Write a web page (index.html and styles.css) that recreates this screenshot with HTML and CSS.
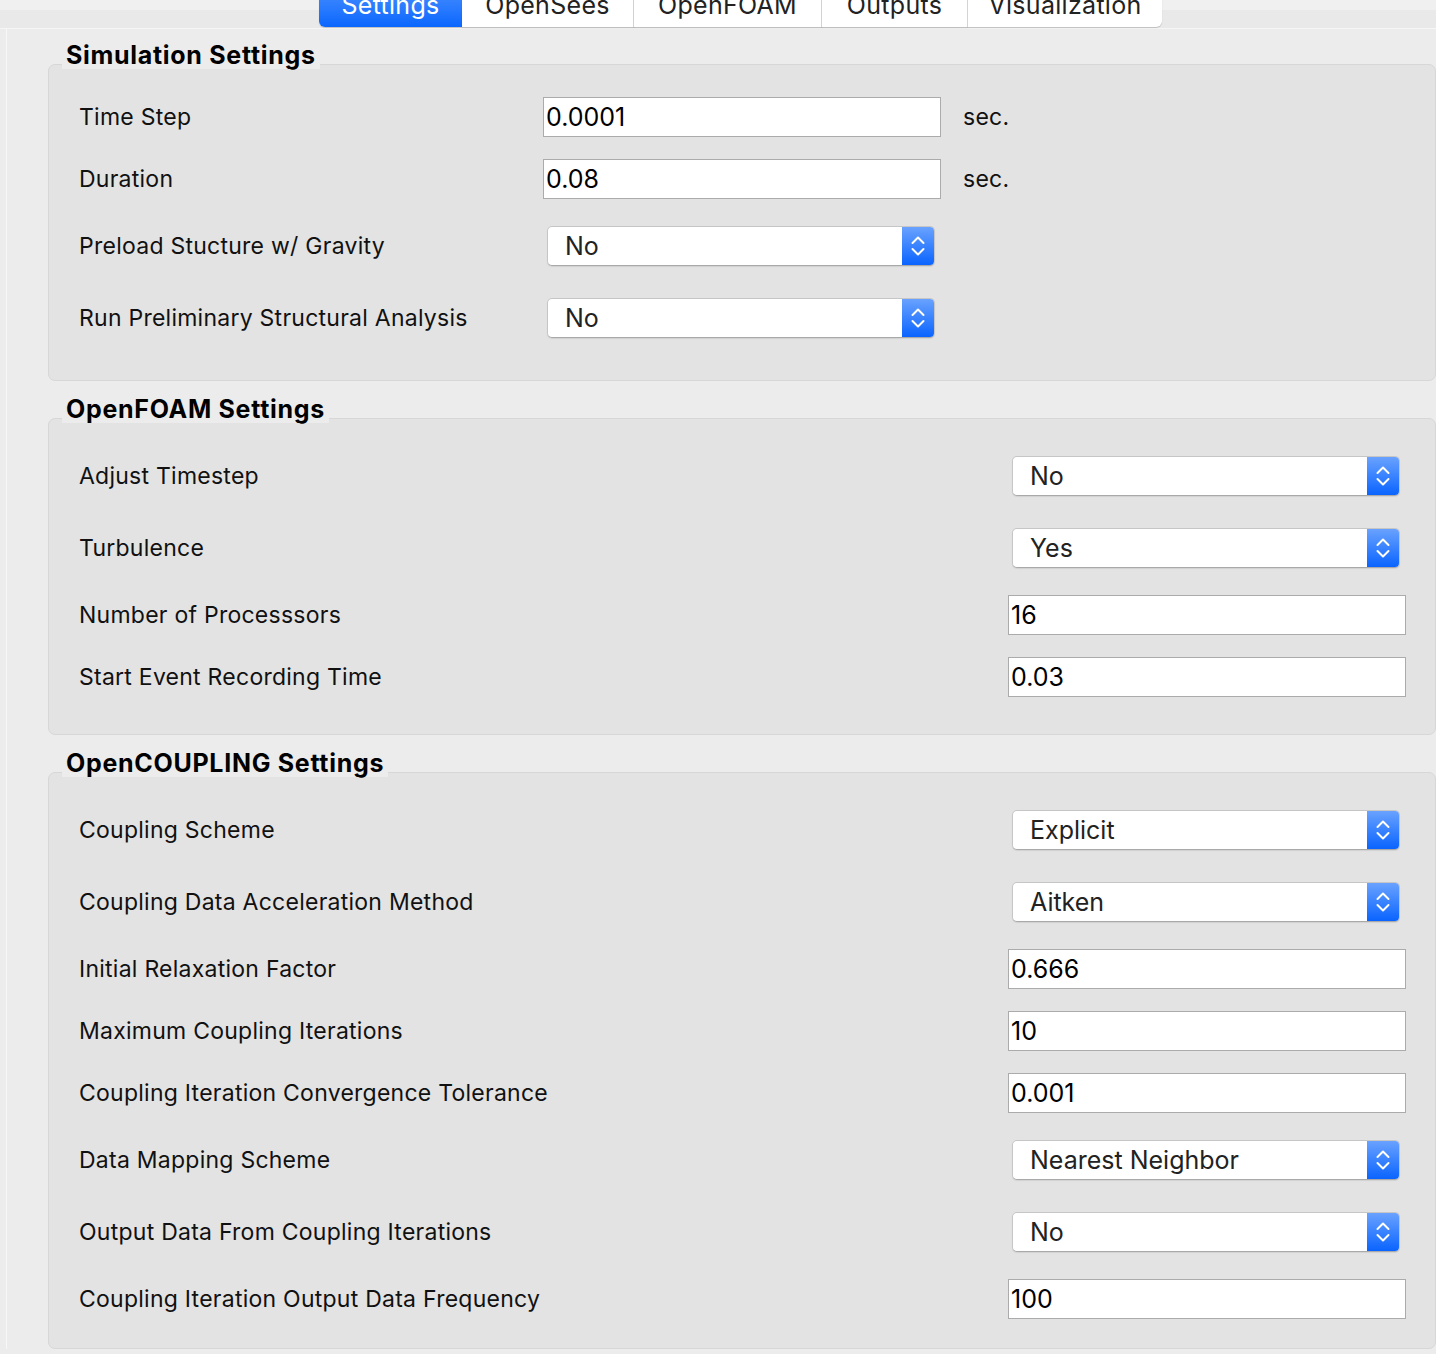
FILE: index.html
```html
<!DOCTYPE html>
<html>
<head>
<meta charset="utf-8">
<title>Settings</title>
<link rel="stylesheet" href="styles.css">
</head>
<body>
<div class="window">
  <div class="tabbar">
    <div class="tabs">
      <div class="tab tab--active tab--settings">Settings</div>
      <div class="tab tab--opensees">OpenSees</div>
      <div class="tab tab--openfoam">OpenFOAM</div>
      <div class="tab tab--outputs">Outputs</div>
      <div class="tab tab--vis">Visualization</div>
    </div>
  </div>
  <div class="panel">
    <section class="group">
      <h2 class="group-title">Simulation Settings</h2>
      <div class="group-box grid-units">
        <div class="label">Time Step</div>
        <div class="field"><input class="text-input" type="text" value="0.0001"></div>
        <div class="unit">sec.</div>

        <div class="label">Duration</div>
        <div class="field"><input class="text-input" type="text" value="0.08"></div>
        <div class="unit">sec.</div>

        <div class="label row-select">Preload Stucture w/ Gravity</div>
        <div class="field row-select"><div class="select"><span class="select-value">No</span><span class="select-btn"><svg width="16" height="28" viewBox="0 0 16 28"><path d="M2.5 11 L8 5.5 L13.5 11 M2.5 17 L8 22.5 L13.5 17" fill="none" stroke="#fff" stroke-width="2" stroke-linecap="round" stroke-linejoin="round"/></svg></span></div></div>
        <div class="unit row-select"></div>

        <div class="label row-select">Run Preliminary Structural Analysis</div>
        <div class="field row-select"><div class="select"><span class="select-value">No</span><span class="select-btn"><svg width="16" height="28" viewBox="0 0 16 28"><path d="M2.5 11 L8 5.5 L13.5 11 M2.5 17 L8 22.5 L13.5 17" fill="none" stroke="#fff" stroke-width="2" stroke-linecap="round" stroke-linejoin="round"/></svg></span></div></div>
        <div class="unit row-select"></div>
      </div>
    </section>

    <section class="group">
      <h2 class="group-title">OpenFOAM Settings</h2>
      <div class="group-box grid-right">
        <div class="label row-select">Adjust Timestep</div>
        <div class="field row-select"><div class="select"><span class="select-value">No</span><span class="select-btn"><svg width="16" height="28" viewBox="0 0 16 28"><path d="M2.5 11 L8 5.5 L13.5 11 M2.5 17 L8 22.5 L13.5 17" fill="none" stroke="#fff" stroke-width="2" stroke-linecap="round" stroke-linejoin="round"/></svg></span></div></div>

        <div class="label row-select">Turbulence</div>
        <div class="field row-select"><div class="select"><span class="select-value">Yes</span><span class="select-btn"><svg width="16" height="28" viewBox="0 0 16 28"><path d="M2.5 11 L8 5.5 L13.5 11 M2.5 17 L8 22.5 L13.5 17" fill="none" stroke="#fff" stroke-width="2" stroke-linecap="round" stroke-linejoin="round"/></svg></span></div></div>

        <div class="label">Number of Processsors</div>
        <div class="field"><input class="text-input" type="text" value="16"></div>

        <div class="label">Start Event Recording Time</div>
        <div class="field"><input class="text-input" type="text" value="0.03"></div>
      </div>
    </section>

    <section class="group">
      <h2 class="group-title">OpenCOUPLING Settings</h2>
      <div class="group-box group-box--last grid-right">
        <div class="label row-select">Coupling Scheme</div>
        <div class="field row-select"><div class="select"><span class="select-value">Explicit</span><span class="select-btn"><svg width="16" height="28" viewBox="0 0 16 28"><path d="M2.5 11 L8 5.5 L13.5 11 M2.5 17 L8 22.5 L13.5 17" fill="none" stroke="#fff" stroke-width="2" stroke-linecap="round" stroke-linejoin="round"/></svg></span></div></div>

        <div class="label row-select">Coupling Data Acceleration Method</div>
        <div class="field row-select"><div class="select"><span class="select-value">Aitken</span><span class="select-btn"><svg width="16" height="28" viewBox="0 0 16 28"><path d="M2.5 11 L8 5.5 L13.5 11 M2.5 17 L8 22.5 L13.5 17" fill="none" stroke="#fff" stroke-width="2" stroke-linecap="round" stroke-linejoin="round"/></svg></span></div></div>

        <div class="label">Initial Relaxation Factor</div>
        <div class="field"><input class="text-input" type="text" value="0.666"></div>

        <div class="label">Maximum Coupling Iterations</div>
        <div class="field"><input class="text-input" type="text" value="10"></div>

        <div class="label">Coupling Iteration Convergence Tolerance</div>
        <div class="field"><input class="text-input" type="text" value="0.001"></div>

        <div class="label row-select">Data Mapping Scheme</div>
        <div class="field row-select"><div class="select"><span class="select-value">Nearest Neighbor</span><span class="select-btn"><svg width="16" height="28" viewBox="0 0 16 28"><path d="M2.5 11 L8 5.5 L13.5 11 M2.5 17 L8 22.5 L13.5 17" fill="none" stroke="#fff" stroke-width="2" stroke-linecap="round" stroke-linejoin="round"/></svg></span></div></div>

        <div class="label row-select">Output Data From Coupling Iterations</div>
        <div class="field row-select"><div class="select"><span class="select-value">No</span><span class="select-btn"><svg width="16" height="28" viewBox="0 0 16 28"><path d="M2.5 11 L8 5.5 L13.5 11 M2.5 17 L8 22.5 L13.5 17" fill="none" stroke="#fff" stroke-width="2" stroke-linecap="round" stroke-linejoin="round"/></svg></span></div></div>

        <div class="label">Coupling Iteration Output Data Frequency</div>
        <div class="field"><input class="text-input" type="text" value="100"></div>
      </div>
    </section>
  </div>
</div>
</body>
</html>
```

FILE: styles.css
```css
* { box-sizing: border-box; }

html, body {
  margin: 0;
  padding: 0;
  background: #ececec;
  overflow: hidden;
}

body {
  font-family: Inter, "Liberation Sans", sans-serif;
  color: #111;
  width: 1436px;
  height: 1354px;
}

.window {
  width: 1436px;
  height: 1354px;
  background: #ececec;
  overflow: hidden;
}

/* ---------- tab bar ---------- */
.tabbar {
  display: flex;
  align-items: flex-start;
  height: 29px;
  background: linear-gradient(#f0f0f0 0 10px, #e9e9e9 10px 28px, #f6f6f6 28px 29px);
  padding-left: 319px;
}

.tabs {
  display: flex;
  height: 40px;
  margin-top: -13px;
  position: relative;
  z-index: 1;
}

.tab {
  height: 40px;
  background: #fff;
  color: #222;
  font-size: 25px;
  letter-spacing: 0.3px;
  line-height: 36px;
  text-align: center;
  overflow: hidden;
  border-right: 1px solid #d8d8d8;
  box-shadow: 0 1px 1px rgba(0,0,0,0.18);
}

.tab--settings { width: 143px; }
.tab--opensees { width: 172px; }
.tab--openfoam { width: 188px; }
.tab--outputs { width: 146px; }
.tab--vis { width: 194px; border-right: none; border-bottom-right-radius: 6px; }

.tab--active {
  background: linear-gradient(#4a8fff, #0b67fe);
  color: #fff;
  border-right: none;
  border-bottom-left-radius: 6px;
}

/* ---------- panel ---------- */
.panel {
  margin-left: 6px;
  padding: 10px 0 0 41px;
  border-left: 1px solid #f7f7f7;
}

.group {
  margin: 0 0 12px 0;
}

.group-title {
  position: relative;
  z-index: 1;
  display: inline-block;
  margin: 0 0 0 14px;
  padding: 0 4px;
  height: 30px;
  line-height: 32px;
  font-size: 25px;
  letter-spacing: 0.7px;
  font-weight: 700;
  color: #000;
  background: #ececec;
}

.group-box {
  width: 1388px;
  margin-top: -5px;
  background: #e3e3e3;
  border: 1px solid #d7d7d7;
  border-radius: 7px;
  padding: 32px 29px 37px 30px;
  display: grid;
  row-gap: 22px;
  align-items: center;
}

.group-box--last { padding-bottom: 29px; }

.grid-units {
  grid-template-columns: 442px 398px 1fr;
  column-gap: 22px;
}

.grid-right {
  grid-template-columns: 1fr 398px;
}

.label,
.unit {
  font-size: 23px;
  letter-spacing: 0.25px;
  color: #111;
  height: 40px;
  line-height: 40px;
}

.row-select { height: 50px; line-height: 50px; }

.field { height: 40px; display: flex; align-items: center; }
.field.row-select { height: 50px; }

.text-input {
  width: 398px;
  height: 40px;
  border: 1px solid #ababab;
  background: #fff;
  padding: 0 2px;
  font-family: Inter, "Liberation Sans", sans-serif;
  font-size: 25px;
  color: #000;
  outline: none;
  margin: 0;
}

.select {
  margin: 0 4px;
  width: 388px;
  height: 40px;
  display: flex;
  background: #fff;
  border: 1px solid #c6c6c6;
  border-bottom-color: #a9a9a9;
  border-radius: 5px;
  box-shadow: 0 1px 1px rgba(0,0,0,0.08);
  overflow: hidden;
}

.select-value {
  flex: 1;
  padding-left: 17px;
  font-size: 25px;
  line-height: 38px;
  color: #222;
}

.select-btn {
  width: 32px;
  display: flex;
  align-items: center;
  justify-content: center;
  background: linear-gradient(#69a2ff, #0a64ff);
}
```
